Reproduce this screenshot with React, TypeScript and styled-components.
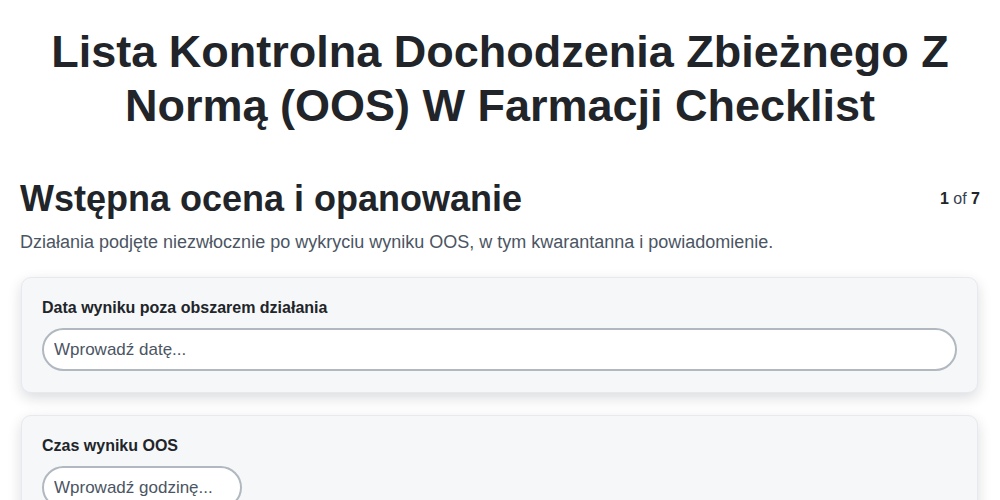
import React from "react";
import styled, { createGlobalStyle } from "styled-components";

const GlobalStyle = createGlobalStyle`
  html, body {
    margin: 0;
    padding: 0;
    background: #ffffff;
  }
  body {
    font-family: "Liberation Sans", Arial, sans-serif;
    color: #212529;
  }
  * { box-sizing: border-box; }
`;

const Page = styled.main`
  padding: 25px 20px 40px;
  display: flex;
  flex-direction: column;
`;

const Title = styled.h1`
  margin: 0 0 44px;
  font-size: 45px;
  line-height: 1.2;
  font-weight: 700;
  text-align: center;
  color: #212529;
`;

const SectionHeader = styled.div`
  display: flex;
  align-items: center;
  justify-content: space-between;
  gap: 16px;
`;

const SectionTitle = styled.h2`
  margin: 0;
  font-size: 36px;
  line-height: 1.2;
  font-weight: 700;
  color: #212529;
`;

const Counter = styled.div`
  font-size: 16px;
  color: #374151;
  white-space: nowrap;
  b { color: #212529; }
`;

const SectionDescription = styled.p`
  margin: 9px 0 21px;
  font-size: 18px;
  line-height: 1.5;
  color: #4b5563;
`;

const Fields = styled.div`
  display: flex;
  flex-direction: column;
  gap: 22px;
  padding: 0 2px 0 1px;
`;

const Card = styled.section`
  background: #f6f7f9;
  border: 1px solid #e7e9ee;
  border-radius: 10px;
  padding: 20px 20px 21px;
  box-shadow: 0 5px 14px rgba(15, 23, 42, 0.15);
`;

const Label = styled.label`
  display: block;
  font-size: 16px;
  line-height: 1.3;
  font-weight: 700;
  color: #212529;
  margin-bottom: 9px;
`;

const Input = styled.input<{ $width?: number }>`
  display: block;
  width: ${(p) => (p.$width ? `${p.$width}px` : "100%")};
  padding: 10px 10px;
  font-family: "Liberation Sans", Arial, sans-serif;
  font-size: 17px;
  line-height: 19px;
  color: #212529;
  background: #ffffff;
  border: 2px solid #b1b8c0;
  border-radius: 999px;
  outline: none;
  &::placeholder { color: #4b5563; }
`;

export default function App() {
  return (
    <>
      <GlobalStyle />
      <Page>
        <Title>Lista Kontrolna Dochodzenia Zbieżnego Z Normą (OOS) W Farmacji Checklist</Title>
        <SectionHeader>
          <SectionTitle>Wstępna ocena i opanowanie</SectionTitle>
          <Counter>
            <b>1</b> of <b>7</b>
          </Counter>
        </SectionHeader>
        <SectionDescription>
          Działania podjęte niezwłocznie po wykryciu wyniku OOS, w tym kwarantanna i powiadomienie.
        </SectionDescription>
        <Fields>
          <Card>
            <Label htmlFor="oos-date">Data wyniku poza obszarem działania</Label>
            <Input id="oos-date" type="text" placeholder="Wprowadź datę..." />
          </Card>
          <Card>
            <Label htmlFor="oos-time">Czas wyniku OOS</Label>
            <Input id="oos-time" type="text" placeholder="Wprowadź godzinę..." $width={200} />
          </Card>
        </Fields>
      </Page>
    </>
  );
}
